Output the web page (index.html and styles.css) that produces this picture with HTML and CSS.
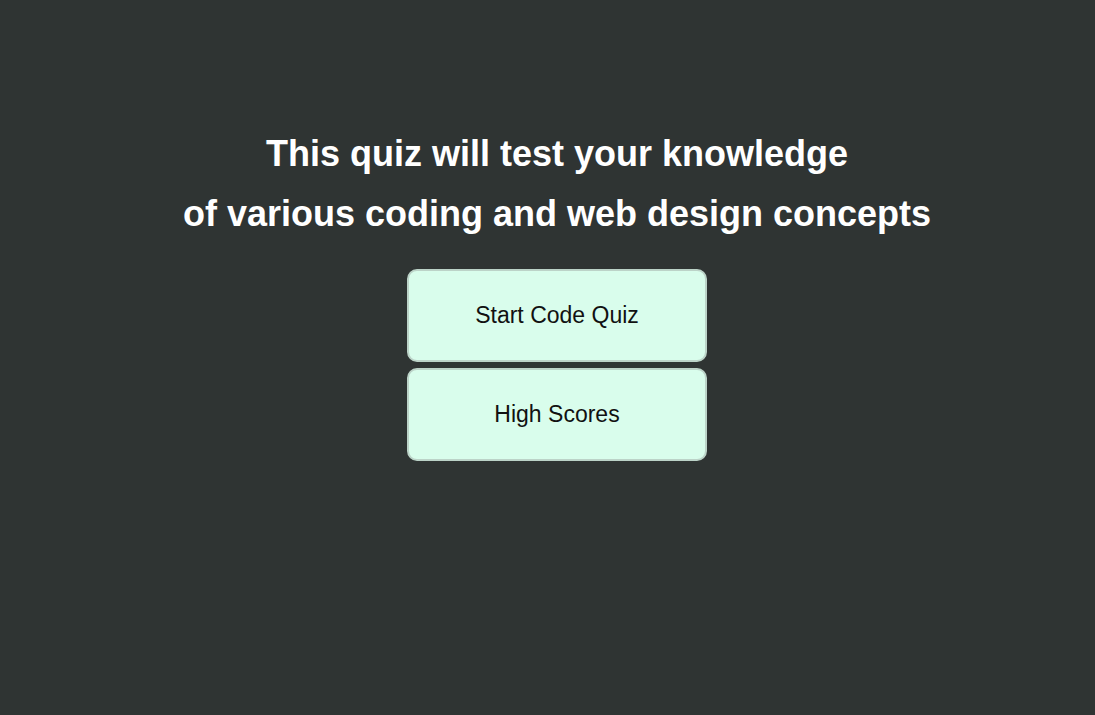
FILE: index.html
```html
<!DOCTYPE html>
<html>
<head>
<meta charset="utf-8">
<link rel="stylesheet" href="styles.css">
</head>
<body>
<main class="intro">
  <h1 class="title">This quiz will test your knowledge<br>of various coding and web design concepts</h1>
  <div class="actions">
    <button class="btn">Start Code Quiz</button>
    <button class="btn">High Scores</button>
  </div>
</main>
</body>
</html>
```
FILE: styles.css
```css
html, body {
  margin: 0;
  padding: 0;
  height: 100%;
}
body {
  background: #2f3433;
  font-family: "Liberation Sans", Arial, sans-serif;
}
.intro {
  display: flex;
  flex-direction: column;
  align-items: center;
  padding-top: 124px;
  padding-left: 19px;
}
.title {
  margin: 0;
  color: #ffffff;
  font-size: 36px;
  font-weight: bold;
  line-height: 60px;
  text-align: center;
}
.actions {
  display: flex;
  flex-direction: column;
  gap: 6px;
  margin-top: 25px;
}
.btn {
  width: 300px;
  height: 93px;
  background: #d9fdec;
  border: 2px solid #bcd3c8;
  border-radius: 10px;
  font-family: "Liberation Sans", Arial, sans-serif;
  font-size: 23px;
  color: #111111;
  padding: 0;
}
```
